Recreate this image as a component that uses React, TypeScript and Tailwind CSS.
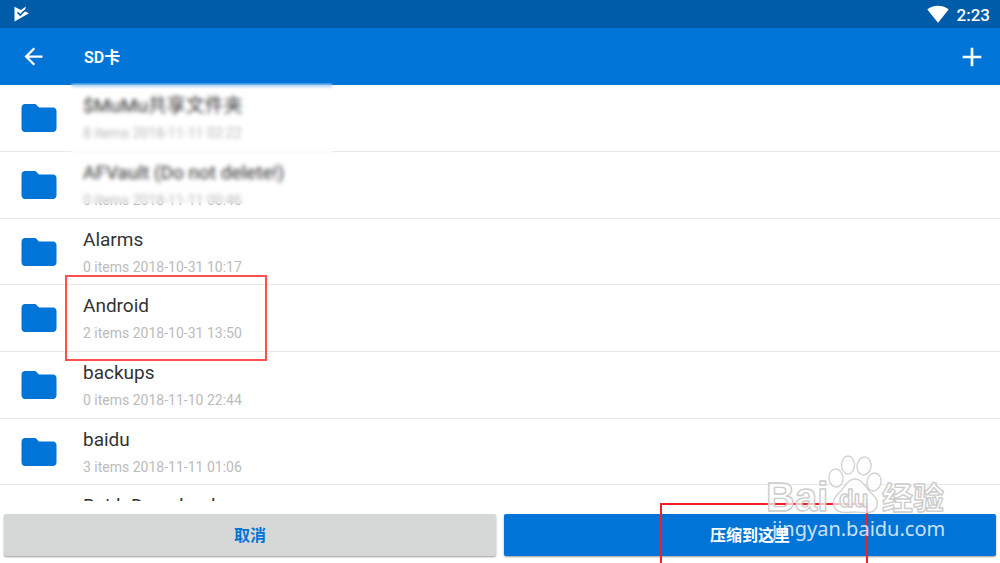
import React from 'react';
import { MdAdd, MdArrowBack, MdFolder, MdSignalWifi4Bar } from 'react-icons/md';

interface FolderItem {
  name: string;
  items: number;
  date: string;
  marked?: boolean;
}

const folders: FolderItem[] = [
  { name: '$MuMu共享文件夹', items: 8, date: '2018-11-11 02:22' },
  { name: 'AFVault (Do not delete!)', items: 0, date: '2018-11-11 00:46' },
  { name: 'Alarms', items: 0, date: '2018-10-31 10:17' },
  { name: 'Android', items: 2, date: '2018-10-31 13:50', marked: true },
  { name: 'backups', items: 0, date: '2018-11-10 22:44' },
  { name: 'baidu', items: 3, date: '2018-11-11 01:06' },
  { name: 'BaiduDownload', items: 0, date: '2018-11-11 01:06' },
];

const StatusBar: React.FC = () => (
  <div className="flex h-7 shrink-0 items-center justify-between bg-[#005ca9] pr-[10px] pl-[14px] text-white">
    <svg width="16" height="16" viewBox="0 0 16 16" aria-hidden="true">
      <path d="M0.5 0.8 7 4 12 0.6 10.5 5.2 15 7.2 0.5 15.6Z" fill="#fff" />
      <path d="M3.6 6.4 6.2 9 11.2 4" fill="none" stroke="#005ca9" strokeWidth="1.6" />
    </svg>
    <div className="flex items-center gap-2">
      <MdSignalWifi4Bar size={22} />
      <span className="pt-px text-[17px] leading-7 font-medium">2:23</span>
    </div>
  </div>
);

const AppBar: React.FC = () => (
  <header className="flex h-[57px] shrink-0 items-center bg-[#0075d7] pr-3 pl-5 text-white">
    <button type="button" aria-label="返回" className="w-16">
      <MdArrowBack size={27} />
    </button>
    <h1 className="flex-1 pt-[2px] text-base font-semibold">SD卡</h1>
    <button type="button" aria-label="新建">
      <MdAdd size={32} />
    </button>
  </header>
);

const FolderRow: React.FC<{ folder: FolderItem }> = ({ folder }) => (
  <li className="relative flex h-[67px] items-start gap-[23px] border-b border-[#e9e9e9] pl-[18px] nth-[3n]:h-[66px]">
    <MdFolder size={42} className="mt-3 shrink-0 text-[#0075d7]" />
    <div className="pt-[9px]">
      <p className="text-[19px] leading-6 text-[#333]">{folder.name}</p>
      <p className="mt-[5px] text-sm text-[#bbb]">
        {folder.items} items {folder.date}
      </p>
    </div>
    {folder.marked && (
      <span className="absolute -top-[10px] left-[65px] z-10 h-[86px] w-[202px] border-2 border-[#ff5050]" />
    )}
  </li>
);

const Watermark: React.FC = () => (
  <svg
    className="pointer-events-none absolute right-[50px] bottom-0 z-20"
    width="190"
    height="113"
    viewBox="0 0 190 113"
    aria-hidden="true"
  >
    <g fill="#fff" fillOpacity="0.7" stroke="#d2d2d2" strokeWidth="1.4">
      <ellipse cx="76" cy="28" rx="7" ry="9" transform="rotate(-8 76 28)" />
      <ellipse cx="88" cy="15" rx="6.5" ry="9" />
      <ellipse cx="104" cy="16" rx="7" ry="9" transform="rotate(10 104 16)" />
      <ellipse cx="114" cy="32" rx="7" ry="9" transform="rotate(12 114 32)" />
      <path d="M95 29C88 29 85 36 81 41C76 46 72 49 74 56C76 63 83 63 95 62C107 63 115 64 117 56C119 49 114 46 109 41C105 36 102 29 95 29Z" />
    </g>
    <g
      fill="#fff"
      fillOpacity="0.7"
      stroke="#ccc"
      strokeWidth="1.4"
      strokeLinejoin="round"
      fontWeight="700"
    >
      <text x="6" y="61" fontSize="40" fontFamily="Liberation Sans, sans-serif">Bai</text>
      <text x="79" y="57" fontSize="24" fontFamily="Liberation Sans, sans-serif">du</text>
      <text x="122" y="59" fontSize="31" fontFamily="Noto Sans CJK SC, sans-serif">经验</text>
    </g>
    <text
      x="12"
      y="86"
      fontSize="20"
      fill="#fff"
      fillOpacity="0.8"
      fontFamily="Noto Sans, sans-serif"
    >
      jingyan.baidu.com
    </text>
  </svg>
);

const App: React.FC = () => {
  return (
    <div className="relative flex h-screen flex-col overflow-hidden bg-white font-[Roboto,'Noto_Sans_CJK_SC',sans-serif]">
      <StatusBar />
      <AppBar />

      <ul className="min-h-0 flex-1 overflow-y-auto [scrollbar-width:none]">
        {folders.map((folder) => (
          <FolderRow key={folder.name} folder={folder} />
        ))}
      </ul>

      <div className="absolute top-[83px] left-[71px] h-[121px] w-[262px] backdrop-blur-[2px]" />

      <footer className="relative grid shrink-0 grid-cols-2 gap-2 px-1 pt-[13px] pb-[7px] text-base font-bold">
        <button
          type="button"
          className="h-[42px] rounded-xs bg-[#d6d7d7] pt-px text-[#0075d7] shadow-[0_1px_2px_rgba(0,0,0,0.4)]"
        >
          取消
        </button>
        <button
          type="button"
          className="h-[42px] rounded-xs bg-[#0075d7] pt-px text-white shadow-[0_1px_2px_rgba(0,0,0,0.4)]"
        >
          压缩到这里
        </button>
        <span className="absolute top-[2px] right-[132px] bottom-0 w-[208px] border-2 border-b-0 border-[#f51c24]" />
      </footer>

      <Watermark />
    </div>
  );
};

export default App;
